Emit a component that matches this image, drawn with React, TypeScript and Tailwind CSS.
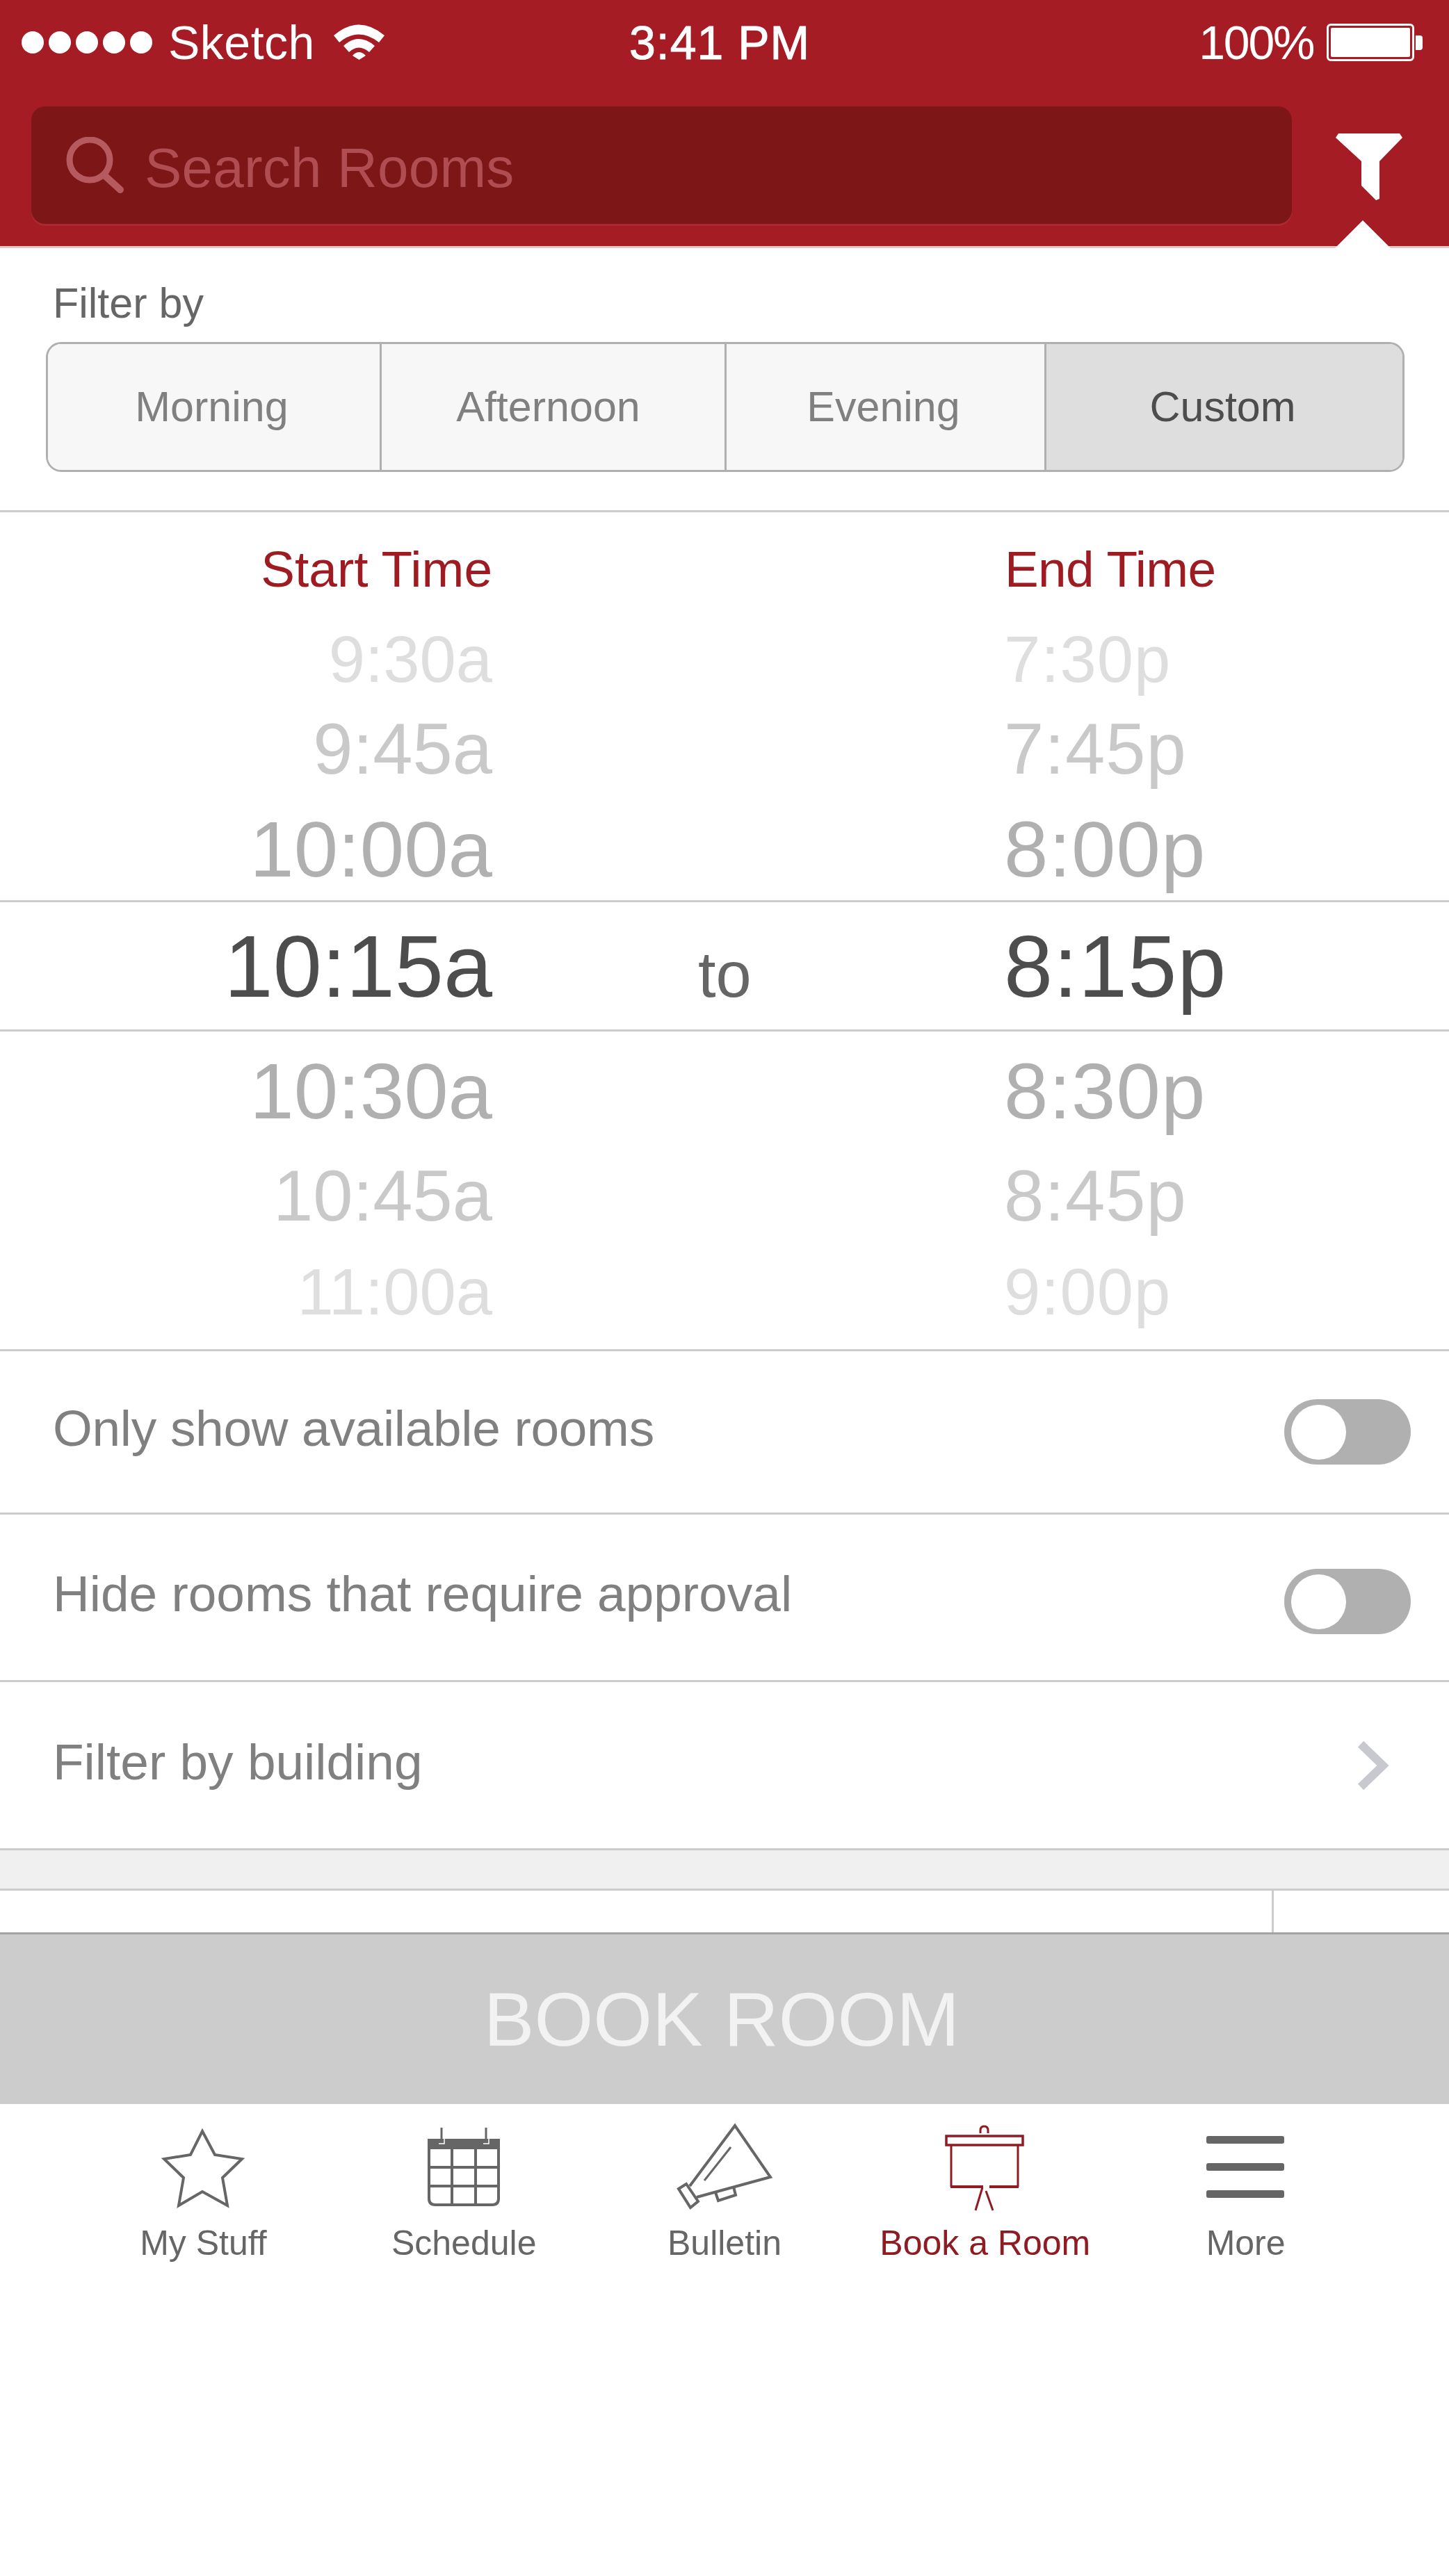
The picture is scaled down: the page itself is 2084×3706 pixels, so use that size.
const segments = [
  { label: 'Morning', width: 'w-[477px] pr-[6px]', active: false },
  { label: 'Afternoon', width: 'w-[496px] pr-[14px]', active: false },
  { label: 'Evening', width: 'w-[460px] pr-[6px]', active: false },
  { label: 'Custom', width: 'flex-1 pr-[5px]', active: true },
];

const upperRows = [
  { start: '9:30a', end: '7:30p', cls: 'h-[103px] leading-[103px] text-[94px] text-[#dedede]' },
  { start: '9:45a', end: '7:45p', cls: 'h-[155px] leading-[155px] text-[103px] text-[#c9c9c9]' },
  { start: '10:00a', end: '8:00p', cls: 'h-[133px] leading-[133px] text-[114px] text-[#b0b0b0]' },
];

const lowerRows = [
  { start: '10:30a', end: '8:30p', cls: 'h-[171px] leading-[171px] text-[114px] text-[#b0b0b0]' },
  { start: '10:45a', end: '8:45p', cls: 'h-[132px] leading-[132px] text-[103px] text-[#c9c9c9]' },
  { start: '11:00a', end: '9:00p', cls: 'h-[143px] leading-[143px] text-[94px] text-[#dedede]' },
];

const TimeRow = ({ start, end, cls }: { start: string; end: string; cls: string }) => (
  <div className={`flex ${cls}`}>
    <div className="w-[708px] text-right">{start}</div>
    <div className="ml-[736px] tracking-[1px]">{end}</div>
  </div>
);

const Toggle = () => (
  <div className="flex h-[94px] w-[182px] items-center rounded-full bg-[#b0b0b0] pl-[10px]">
    <div className="h-[79px] w-[79px] rounded-full bg-white" />
  </div>
);

const StarIcon = () => (
  <svg viewBox="217 3050 150 140" className="h-[140px] w-[150px]" fill="none" stroke="#666666" strokeWidth="4">
    <path d="M291 3066 L309 3100 L348 3106 L320 3133 L327 3173 L291 3153 L257 3173 L264 3133 L236 3106 L274 3100 Z" />
  </svg>
);

const CalendarIcon = () => (
  <svg viewBox="592 3050 150 140" className="h-[140px] w-[150px]" fill="none" stroke="#666666" strokeWidth="4">
    <path d="M617 3079 H717 V3163 Q717 3172 708 3172 H626 Q617 3172 617 3163 Z" />
    <rect x="615" y="3077" width="104" height="15" fill="#666666" stroke="none" />
    <path d="M617 3118 H717 M617 3145 H717 M650 3090 V3172 M684 3090 V3172" />
    <path d="M635 3061 V3082 M699 3061 V3082" strokeWidth="3" />
    <path d="M639 3076 V3084 H631 M703 3076 V3084 H695" stroke="#ffffff" strokeWidth="1.5" />
  </svg>
);

const MegaphoneIcon = () => (
  <svg viewBox="967 3050 150 140" className="h-[140px] w-[150px]" fill="none" stroke="#666666" strokeWidth="4" strokeLinejoin="miter">
    <path d="M992 3145 L1057 3058 L1108 3132 L1002 3161" />
    <path d="M976 3149 L987 3142 L1004 3167 L993 3176 Z" />
    <path d="M1029 3154 L1033 3166 L1058 3158 L1055 3146" />
    <path d="M1051 3089 L1013 3137" strokeWidth="3" />
  </svg>
);

const ScreenIcon = () => (
  <svg viewBox="1343 3050 150 140" className="h-[140px] w-[150px]" fill="none" stroke="#8e1c22" strokeWidth="3">
    <path d="M1411 3069 V3065 Q1411 3059 1416.5 3059 Q1422 3059 1422 3065 V3069" />
    <rect x="1362" y="3073" width="110" height="13" strokeWidth="3.5" />
    <path d="M1369 3086 V3146 M1465 3086 V3146" />
    <path d="M1368 3146 H1415 M1424 3146 H1466" strokeWidth="4" />
    <path d="M1414 3147 L1404 3180 M1419 3152 L1429 3180" />
  </svg>
);

const MenuIcon = () => (
  <svg viewBox="1718 3050 150 140" className="h-[140px] w-[150px]" fill="#666666">
    <rect x="1736" y="3073" width="112" height="11" rx="3" />
    <rect x="1736" y="3112" width="112" height="11" rx="3" />
    <rect x="1736" y="3151" width="112" height="11" rx="3" />
  </svg>
);

const tabs = [
  { label: 'My Stuff', icon: <StarIcon />, active: false },
  { label: 'Schedule', icon: <CalendarIcon />, active: false },
  { label: 'Bulletin', icon: <MegaphoneIcon />, active: false },
  { label: 'Book a Room', icon: <ScreenIcon />, active: true },
  { label: 'More', icon: <MenuIcon />, active: false },
];

export default function App() {
  return (
    <div className="h-[3706px] w-[2084px] overflow-hidden bg-white font-['Liberation_Sans',Arial,sans-serif]">
      {/* Red header */}
      <header className="relative h-[357px] border-b-[3px] border-[#e3c6c8] bg-[#a51c24]">
        <div className="flex h-[153px] items-start pt-[27px] text-[68px] leading-[68px] text-white">
          <div className="flex w-[905px] items-start pl-[31px]">
            <div className="flex gap-[7px] pt-[18px]">
              <span className="h-[32px] w-[32px] rounded-full bg-white" />
              <span className="h-[32px] w-[32px] rounded-full bg-white" />
              <span className="h-[32px] w-[32px] rounded-full bg-white" />
              <span className="h-[32px] w-[32px] rounded-full bg-white" />
              <span className="h-[32px] w-[32px] rounded-full bg-white" />
            </div>
            <span className="ml-[23px] tracking-[0.5px]">Sketch</span>
            <svg viewBox="0 0 73 52" className="ml-[27px] mt-[7px] h-[52px] w-[73px]" fill="#ffffff">
              <path d="M0 17 Q36 -14 73 17 L65 27 Q36 4 8 27 Z" />
              <path d="M14 32 Q36 12 59 32 L51 41 Q36 28 22 41 Z" />
              <path d="M27 46 Q36 36 46 46 L36.5 52 Z" />
            </svg>
          </div>
          <span className="tracking-[1px] [-webkit-text-stroke:1px_white]">3:41 PM</span>
          <span className="ml-[559px] tracking-[-2.2px]">100%</span>
          <div className="ml-[19px] mt-[7px] flex items-center">
            <div className="h-[54px] w-[126px] rounded-[6px] border-[3px] border-white p-[3px]">
              <div className="h-full w-full rounded-[2px] bg-white" />
            </div>
            <div className="ml-[2px] h-[21px] w-[10px] rounded-r-[4px] bg-white" />
          </div>
        </div>
        <div className="flex pl-[45px]">
          <div className="flex h-[169px] w-[1813px] items-center rounded-[20px] bg-[#7c1617] pl-[50px] shadow-[0_3px_0_#ab2a31]">
            <svg viewBox="0 0 83 81" className="h-[81px] w-[83px]" fill="none" stroke="#b65a60" strokeWidth="9">
              <circle cx="34" cy="33" r="29" />
              <path d="M55 55 L78 76" strokeLinecap="round" strokeWidth="10" />
            </svg>
            <span className="ml-[30px] pt-[8px] text-[80px] leading-[80px] tracking-[0.2px] text-[#b04d53]">Search Rooms</span>
          </div>
          <svg viewBox="1921 192 96 96" className="ml-[63px] mt-[39px] h-[96px] w-[96px]" fill="#ffffff">
            <path d="M1925 192 H2013 L2017 198 L1984 232 V286 L1979 288 L1958 267 V232 L1921 198 Z" />
          </svg>
        </div>
        <svg viewBox="0 0 80 40" className="absolute left-[1920px] top-[317px] h-[40px] w-[80px]" fill="#ffffff">
          <path d="M40 0 L80 40 H0 Z" />
        </svg>
      </header>

      {/* Filter by */}
      <section className="h-[377px] px-[66px]">
        <div className="pl-[10px] pt-[49px] text-[61px] leading-[60px] text-[#666666]">Filter by</div>
        <div className="mt-[26px] flex h-[187px] w-[1954px] overflow-hidden rounded-[22px] border-[3px] border-[#b0b0b0]">
          {segments.map((s) => (
            <div
              key={s.label}
              className={`${s.width} flex items-center justify-center border-l-[3px] border-[#b0b0b0] text-[61px] first:border-l-0 ${
                s.active ? 'bg-[#dedede] text-[#4d4d4d]' : 'bg-[#f7f7f7] text-[#808080]'
              }`}
            >
              {s.label}
            </div>
          ))}
        </div>
      </section>

      {/* Time picker */}
      <section className="border-t-[3px] border-[#cccccc]">
        <div className="flex h-[160px] text-[73px] leading-[163px] text-[#9e1b22]">
          <div className="w-[708px] text-right">Start Time</div>
          <div className="ml-[737px] tracking-[-0.6px]">End Time</div>
        </div>
        {upperRows.map((r) => (
          <TimeRow key={r.start} {...r} />
        ))}
        <div className="mt-[7px] flex h-[189px] items-baseline border-y-[3px] border-[#cccccc] pt-[10px] text-[126px] leading-[165px] text-[#4d4d4d]">
          <div className="w-[708px] text-right">10:15a</div>
          <div className="w-[736px] pl-[296px] text-[92px] text-[#666666]">to</div>
          <div className="tracking-[1px]">8:15p</div>
        </div>
        {lowerRows.map((r) => (
          <TimeRow key={r.start} {...r} />
        ))}
      </section>

      {/* Switch rows */}
      <section className="mt-[11px] text-[73px] text-[#808080]">
        <div className="flex h-[238px] items-center justify-between border-y-[3px] border-[#cccccc] pl-[76px] pr-[55px]">
          <span className="pb-[10px] tracking-[-0.3px]">Only show available rooms</span>
          <Toggle />
        </div>
        <div className="flex h-[241px] items-center justify-between border-b-[3px] border-[#cccccc] pl-[76px] pr-[55px]">
          <span className="pb-[10px]">Hide rooms that require approval</span>
          <div className="pt-[12px]">
            <Toggle />
          </div>
        </div>
        <div className="flex h-[242px] items-center justify-between border-b-[3px] border-[#cccccc] pl-[76px] pr-[86px]">
          <span className="pb-[10px]">Filter by building</span>
          <svg viewBox="0 0 45 72" className="h-[72px] w-[45px]" fill="none" stroke="#c8c8cf" strokeWidth="12">
            <path d="M4 5 L36 36 L4 67" />
          </svg>
        </div>
        <div className="h-[58px] border-b-[3px] border-[#cccccc] bg-[#f0f0f0]" />
        <div className="flex h-[60px] justify-end">
          <div className="mr-[252px] w-[3px] bg-[#cccccc]" />
        </div>
      </section>

      {/* Book button */}
      <div className="flex h-[247px] items-center justify-center border-t-[3px] border-[#a3a3a3] bg-[#cccccc] pr-[8px] text-[109px] leading-none text-[#f2f2f2]">
        BOOK ROOM
      </div>

      {/* Tab bar */}
      <nav className="grid grid-cols-5 px-[105px] pt-[23px]">
        {tabs.map((t) => (
          <div key={t.label} className="flex flex-col items-center">
            {t.icon}
            <span className={`mt-[7px] text-[50px] leading-[60px] ${t.active ? 'text-[#8e1c22]' : 'text-[#666666]'}`}>
              {t.label}
            </span>
          </div>
        ))}
      </nav>
    </div>
  );
}
